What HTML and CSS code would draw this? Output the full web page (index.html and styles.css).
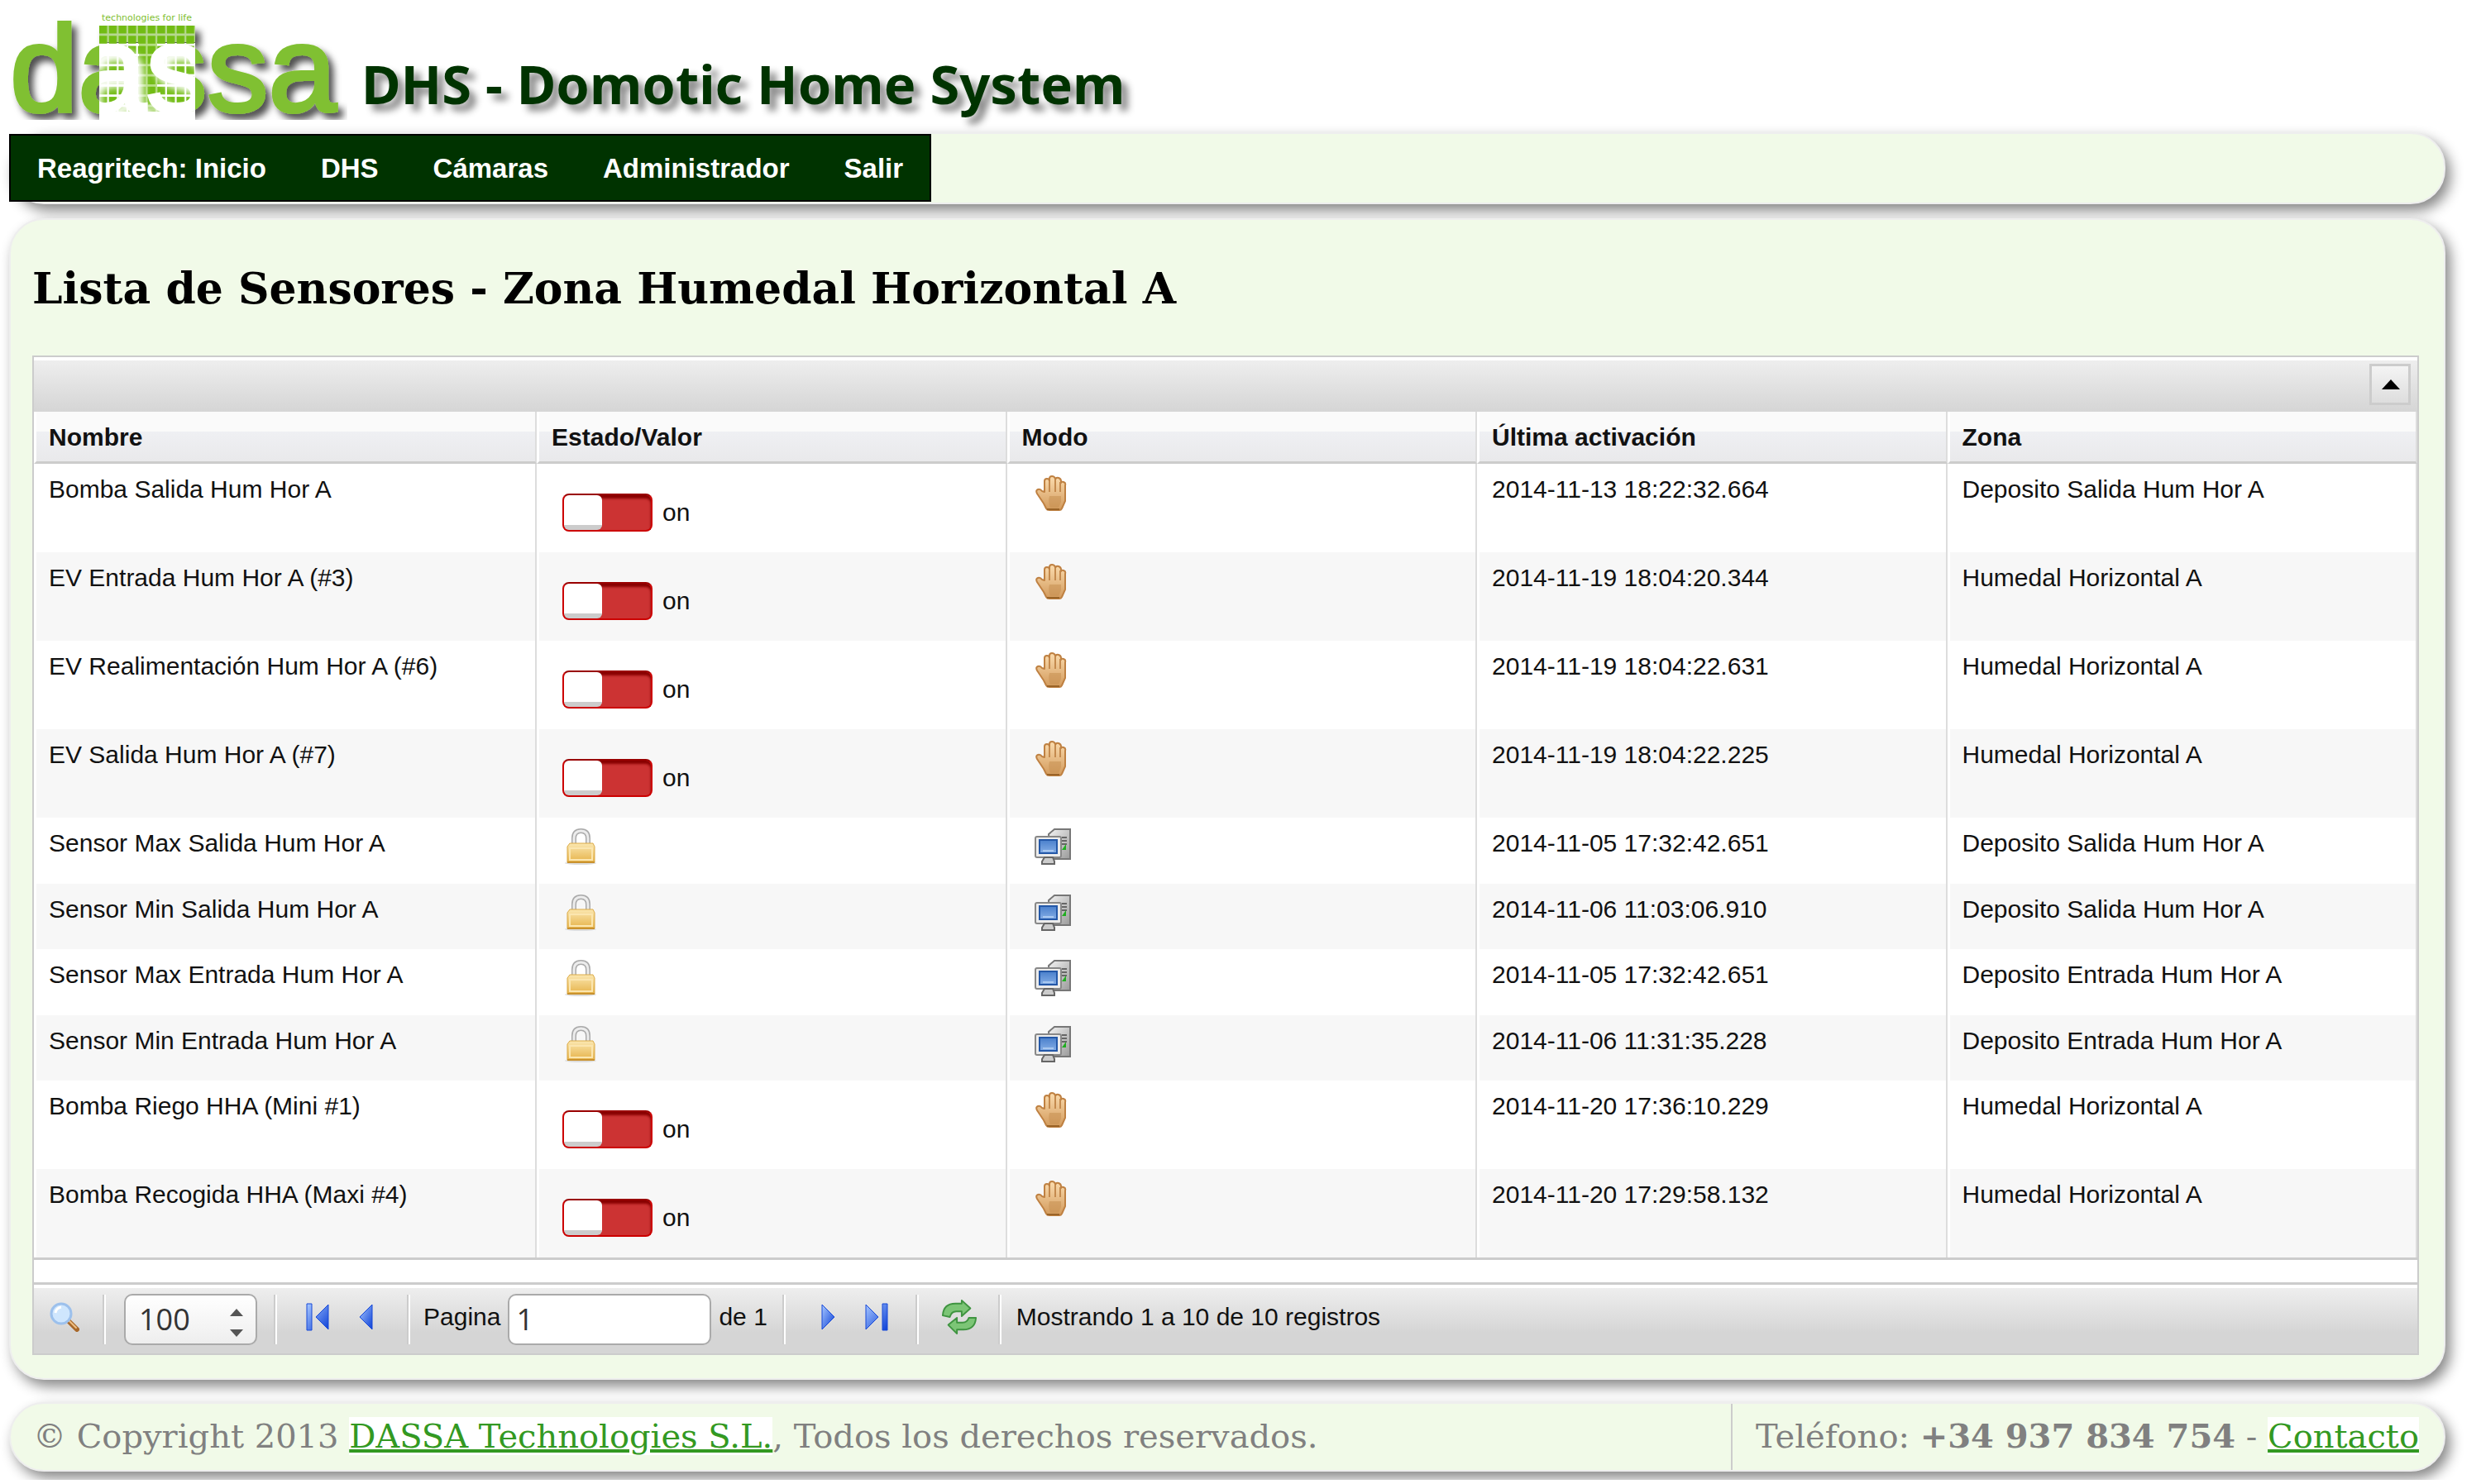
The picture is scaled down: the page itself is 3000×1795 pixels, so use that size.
FILE: index.html
```html
<!doctype html>
<html lang="es">
<head>
    <meta charset="UTF-8">
    <meta name="viewport" content="width=device-width, initial-scale=1.0">
    <title>DHS - Domotic Home System</title>
    <link rel="stylesheet" href="styles.css">
</head>
<body>

<!-- shared icons -->
<svg class="sprite" aria-hidden="true">
    <defs>
        <linearGradient id="gold" x1="0" y1="0" x2="0" y2="1">
            <stop offset="0" stop-color="#fbe7b0"/>
            <stop offset="1" stop-color="#e6b34a"/>
        </linearGradient>
        <linearGradient id="skin" x1="0" y1="0" x2="0" y2="1">
            <stop offset="0" stop-color="#fbdcae"/>
            <stop offset="1" stop-color="#d29a5c"/>
        </linearGradient>
        <linearGradient id="metal" x1="0" y1="0" x2="1" y2="1">
            <stop offset="0" stop-color="#f4f4f4"/>
            <stop offset="1" stop-color="#9a9a9a"/>
        </linearGradient>
        <linearGradient id="screen" x1="0" y1="0" x2="0" y2="1">
            <stop offset="0" stop-color="#4a80cc"/>
            <stop offset="1" stop-color="#85aee6"/>
        </linearGradient>
        <linearGradient id="blue" x1="0" y1="0" x2="1" y2="1">
            <stop offset="0" stop-color="#a8c8ff"/>
            <stop offset="1" stop-color="#0b3fd6"/>
        </linearGradient>
    </defs>
    <symbol id="icon-hand" viewBox="0 0 46 46">
        <path d="M13 22V9q0-3 3-3t3 3V6q0-3 3-3t4 3v1q1-3 4-2t3 4v2q0-2 3-1t2 4v19l-4 9q-1 2-3 2H19q-3 0-4-2l-3-6-8-12q-2-4 1-5t5 2z" fill="url(#skin)" stroke="#bf8142" stroke-width="2" stroke-linejoin="round"/>
        <path d="M19 9v13M26 7v15M32 10v12" fill="none" stroke="#c48a4e" stroke-width="2"/>
        <path d="M19 27h14v7l-3 7H20q-3-7-1-14z" fill="#c68f52" opacity=".55"/>
        <path d="M16 43h15" stroke="#9a6428" stroke-width="2"/>
    </symbol>
    <symbol id="icon-lock" viewBox="0 0 46 46">
        <ellipse cx="21" cy="43" rx="19" ry="2" fill="#ddd"/>
        <path d="M13 22V13q0-9 8.500-9T30 13v9" fill="none" stroke="#aaa" stroke-width="6"/>
        <path d="M13 22V13q0-9 8.500-9T30 13v9" fill="none" stroke="#ececec" stroke-width="3"/>
        <path d="M8 19h28l2 4v19H5V23z" fill="url(#gold)" stroke="#dba944" stroke-width="1"/>
        <path d="M8 25h27v14H8z" fill="none" stroke="#fbe6b0" stroke-width="2"/>
        <path d="M5 42h33" stroke="#c9922f" stroke-width="2"/>
    </symbol>
    <symbol id="icon-computer" viewBox="0 0 46 46">
        <path d="M18 8l7-6h19v36H20z" fill="url(#metal)" stroke="#777" stroke-width="2"/>
        <path d="M34 12h6M34 16h6M34 20h6" stroke="#666" stroke-width="2"/>
        <path d="M39 20v7h-5z" fill="#1fae1f"/>
        <rect x="2" y="11" width="31" height="25" rx="2" fill="#ececec" stroke="#888" stroke-width="2"/>
        <rect x="7" y="15" width="21" height="16" fill="url(#screen)" stroke="#2458a8" stroke-width="2"/>
        <path d="M11 28h13" stroke="#a9c8f0" stroke-width="2"/>
        <path d="M13 36h10l2 5v3H10v-3z" fill="#ccc" stroke="#666" stroke-width="2"/>
    </symbol>
</svg>

<header class="header">
    <svg class="logo" viewBox="11 0 409 145" role="img" aria-label="dassa technologies for life">
        <defs>
            <pattern id="cells" x="120" y="31" width="11.700" height="12.300" patternUnits="userSpaceOnUse">
                <rect width="9.500" height="9.500" fill="#72bc14"/>
            </pattern>
            <!-- the letters turn white where they cross the T -->
            <linearGradient id="word" gradientUnits="userSpaceOnUse" x1="0" y1="0" x2="400" y2="0">
                <stop offset=".3" stop-color="#80c030"/>
                <stop offset=".3" stop-color="#fff"/>
                <stop offset=".59" stop-color="#fff"/>
                <stop offset=".59" stop-color="#80c030"/>
            </linearGradient>
            <filter id="drop" filterUnits="userSpaceOnUse" x="0" y="0" width="420" height="145">
                <feGaussianBlur in="SourceAlpha" stdDeviation="4"/>
                <feOffset dx="6" dy="7" result="soft"/>
                <feFlood x="0" y="0" width="420" height="145" flood-color="#000" flood-opacity=".7" result="dark"/>
                <feFlood x="120" y="56" width="116" height="89" flood-color="#fff" result="light"/>
                <feMerge result="tint">
                    <feMergeNode in="dark"/>
                    <feMergeNode in="light"/>
                </feMerge>
                <feComposite in="tint" in2="soft" operator="in" result="shadow"/>
                <feMerge>
                    <feMergeNode in="shadow"/>
                    <feMergeNode in="SourceGraphic"/>
                </feMerge>
            </filter>
        </defs>
        <path filter="url(#drop)" d="M120 31h116v20H120z" fill="#b6d890"/>
        <path d="M120 52h116v83H120z" fill="#fff"/>
        <path d="M168 50h22v85h-22z" fill="#b6dd85"/>
        <path d="M120 31h116v104H120z" fill="url(#cells)"/>
        <text class="logo-word" filter="url(#drop)" x="12" y="135">dassa</text>
        <text class="logo-tag" x="123" y="25">technologies for life</text>
    </svg>
    <span class="app-title">DHS - Domotic Home System</span>
</header>

<nav class="panel menu">
    <ul class="menu-list">
        <li><a href="#">Reagritech: Inicio</a></li>
        <li><a href="#">DHS</a></li>
        <li><a href="#">Cámaras</a></li>
        <li><a href="#">Administrador</a></li>
        <li><a href="#">Salir</a></li>
    </ul>
</nav>

<main class="panel content">
    <h1>Lista de Sensores - Zona Humedal Horizontal A</h1>

    <div class="grid">
        <div class="grid-title">
            <button type="button" class="toggle" aria-label="Contraer">
                <svg viewBox="0 0 22 12"><path d="M11 0l11 12H0z"/></svg>
            </button>
        </div>

        <table class="sensors">
            <colgroup>
                <col class="col-name">
                <col span="4">
            </colgroup>
            <thead>
            <tr>
                <th>Nombre</th>
                <th>Estado/Valor</th>
                <th>Modo</th>
                <th>Última activación</th>
                <th>Zona</th>
            </tr>
            </thead>
            <tbody>
            <tr class="actuator">
                <td>Bomba Salida Hum Hor A</td>
                <td><label class="switch"><input type="checkbox">on</label></td>
                <td><svg class="icon"><use href="#icon-hand"/></svg></td>
                <td>2014-11-13 18:22:32.664</td>
                <td>Deposito Salida Hum Hor A</td>
            </tr>
            <tr class="actuator">
                <td>EV Entrada Hum Hor A (#3)</td>
                <td><label class="switch"><input type="checkbox">on</label></td>
                <td><svg class="icon"><use href="#icon-hand"/></svg></td>
                <td>2014-11-19 18:04:20.344</td>
                <td>Humedal Horizontal A</td>
            </tr>
            <tr class="actuator">
                <td>EV Realimentación Hum Hor A (#6)</td>
                <td><label class="switch"><input type="checkbox">on</label></td>
                <td><svg class="icon"><use href="#icon-hand"/></svg></td>
                <td>2014-11-19 18:04:22.631</td>
                <td>Humedal Horizontal A</td>
            </tr>
            <tr class="actuator">
                <td>EV Salida Hum Hor A (#7)</td>
                <td><label class="switch"><input type="checkbox">on</label></td>
                <td><svg class="icon"><use href="#icon-hand"/></svg></td>
                <td>2014-11-19 18:04:22.225</td>
                <td>Humedal Horizontal A</td>
            </tr>
            <tr>
                <td>Sensor Max Salida Hum Hor A</td>
                <td><svg class="icon"><use href="#icon-lock"/></svg></td>
                <td><svg class="icon"><use href="#icon-computer"/></svg></td>
                <td>2014-11-05 17:32:42.651</td>
                <td>Deposito Salida Hum Hor A</td>
            </tr>
            <tr>
                <td>Sensor Min Salida Hum Hor A</td>
                <td><svg class="icon"><use href="#icon-lock"/></svg></td>
                <td><svg class="icon"><use href="#icon-computer"/></svg></td>
                <td>2014-11-06 11:03:06.910</td>
                <td>Deposito Salida Hum Hor A</td>
            </tr>
            <tr>
                <td>Sensor Max Entrada Hum Hor A</td>
                <td><svg class="icon"><use href="#icon-lock"/></svg></td>
                <td><svg class="icon"><use href="#icon-computer"/></svg></td>
                <td>2014-11-05 17:32:42.651</td>
                <td>Deposito Entrada Hum Hor A</td>
            </tr>
            <tr>
                <td>Sensor Min Entrada Hum Hor A</td>
                <td><svg class="icon"><use href="#icon-lock"/></svg></td>
                <td><svg class="icon"><use href="#icon-computer"/></svg></td>
                <td>2014-11-06 11:31:35.228</td>
                <td>Deposito Entrada Hum Hor A</td>
            </tr>
            <tr class="actuator">
                <td>Bomba Riego HHA (Mini #1)</td>
                <td><label class="switch"><input type="checkbox">on</label></td>
                <td><svg class="icon"><use href="#icon-hand"/></svg></td>
                <td>2014-11-20 17:36:10.229</td>
                <td>Humedal Horizontal A</td>
            </tr>
            <tr class="actuator">
                <td>Bomba Recogida HHA (Maxi #4)</td>
                <td><label class="switch"><input type="checkbox">on</label></td>
                <td><svg class="icon"><use href="#icon-hand"/></svg></td>
                <td>2014-11-20 17:29:58.132</td>
                <td>Humedal Horizontal A</td>
            </tr>
            </tbody>
        </table>

        <div class="pager">
            <div class="pager-group pager-search">
                <button type="button" aria-label="Buscar">
                    <svg class="icon-search" viewBox="0 0 36 36">
                        <path d="M23 23l10 10" stroke="#a8682a" stroke-width="6" stroke-linecap="round"/>
                        <path d="M23 22l9 9" stroke="#efc084" stroke-width="2" stroke-linecap="round"/>
                        <circle cx="14" cy="14" r="12" fill="#cfe6fd" stroke="#9cc0ec" stroke-width="3"/>
                        <path d="M7 13q1-6 7-7" fill="none" stroke="#fff" stroke-width="3"/>
                    </svg>
                </button>
            </div>
            <div class="pager-group pager-size">
                <div class="page-size">
                    <select aria-label="Registros por página">
                        <option>100</option>
                    </select>
                    <svg class="arrows" viewBox="0 0 16 34"><path d="M8 0l8 9H0zM8 34l8-9H0z" fill="#555"/></svg>
                </div>
            </div>
            <div class="pager-group pager-back">
                <button type="button" aria-label="Primera">
                    <svg class="icon-end" viewBox="0 0 28 34"><path d="M1 1h6v32H1zM27 2v30L12 17z" fill="url(#blue)" stroke="#1648d8" stroke-width="1"/></svg>
                </button>
                <button type="button" aria-label="Anterior">
                    <svg class="icon-step" viewBox="0 0 17 34"><path d="M16 2v30L1 17z" fill="url(#blue)" stroke="#1648d8" stroke-width="1"/></svg>
                </button>
            </div>
            <div class="pager-group pager-page">
                <label class="page-number"><span>Pagina</span> <input type="text" value="1"></label>
                <span>de 1</span>
            </div>
            <div class="pager-group pager-forward">
                <button type="button" aria-label="Siguiente">
                    <svg class="icon-step" viewBox="0 0 17 34"><path d="M1 2v30l15-15z" fill="url(#blue)" stroke="#1648d8" stroke-width="1"/></svg>
                </button>
                <button type="button" aria-label="Última">
                    <svg class="icon-end" viewBox="0 0 28 34"><path d="M21 1h6v32h-6zM1 2v30l15-15z" fill="url(#blue)" stroke="#1648d8" stroke-width="1"/></svg>
                </button>
            </div>
            <div class="pager-group pager-reload">
                <button type="button" aria-label="Recargar">
                    <svg class="icon-reload" viewBox="0 0 46 46">
                        <g fill="#7cc576" stroke="#3f9440" stroke-width="2" stroke-linejoin="round">
                            <path d="M2 21q1-15 16-15h8V2l11 10-11 10v-6h-7q-6 0-8 7z"/>
                            <path d="M44 24q-1 15-16 15h-8v5L9 33l11-9v6h7q6 0 8-6z"/>
                        </g>
                    </svg>
                </button>
            </div>
            <div class="pager-group pager-status">
                <span>Mostrando 1 a 10 de 10 registros</span>
            </div>
        </div>
    </div>
</main>

<footer class="panel footer">
    <p>© Copyright 2013 <a href="#">DASSA Technologies S.L.</a>, Todos los derechos reservados.</p>
    <p class="contact">Teléfono: <strong>+34 937 834 754</strong> - <a href="#">Contacto</a></p>
</footer>

</body>
</html>
```
FILE: styles.css
```css
*,
*::before {
    box-sizing: border-box;
}

body {
    margin: 0;
    padding: 0 43px 0 11px;
    background-color: #fff;
    font-family: "Liberation Sans", Arial, sans-serif;
    font-size: 30px;
    line-height: 34px;
    color: #111;
}

.sprite {
    position: absolute;
    width: 0;
    height: 0;
}

button {
    padding: 0;
    border: none;
    background: none;
    cursor: pointer;
}

button svg {
    display: block;
}

/* header */
.header {
    display: flex;
    align-items: flex-start;
    gap: 17px;
    height: 145px;
}

.logo {
    width: 409px;
    height: 145px;
}

.logo-word {
    font-family: "Liberation Sans", Arial, sans-serif;
    font-size: 148px;
    fill: url(#word);
    stroke: url(#word);
    stroke-width: 4px;
}

.logo-tag {
    font-family: "DejaVu Sans", sans-serif;
    font-size: 11px;
    fill: #80c030;
}

.app-title {
    padding-top: 69px;
    font-family: "Noto Sans", "Open Sans", sans-serif;
    font-size: 65px;
    font-weight: bold;
    line-height: 64px;
    color: #003300;
    text-shadow: 8px 8px 8px #888;
}

/* panels */
.panel {
    background-color: #f1fae8;
    border: 2px solid #eee;
    border-radius: 42px;
    box-shadow: 6px 8px 16px #888;
}

.menu {
    margin-top: 15px;
    height: 87px;
}

.menu-list {
    display: inline-flex;
    gap: 2px;
    margin: 0 0 0 -2px;
    padding: 0;
    list-style: none;
    background-color: #003300;
    border: 2px solid #000;
}

.menu-list a {
    display: block;
    padding: 22px 32px 20px;
    font-size: 33px;
    font-weight: bold;
    line-height: 36px;
    color: #fff;
    text-decoration: none;
}

.content {
    margin-top: 17px;
    padding: 50px 30px 28px 26px;
}

h1 {
    margin: 0 0 48px;
    font-family: "DejaVu Serif", serif;
    font-size: 52px;
    line-height: 66px;
    color: #000;
}

/* grid */
.grid {
    background-color: #fff;
    border: 2px solid #ccc;
}

.grid-title {
    display: flex;
    justify-content: flex-end;
    height: 66px;
    padding: 4px 8px 0;
    border-top: 4px solid #fff;
    background: linear-gradient(#eee, #d5d5d5);
}

.toggle {
    width: 50px;
    height: 50px;
    padding-left: 12px;
    border: 3px solid #ccc;
    background: linear-gradient(#f4f4f4, #ddd);
}

.toggle svg {
    width: 22px;
    height: 12px;
}

.sensors {
    width: 100%;
    table-layout: fixed;
    border-collapse: separate;
    border-spacing: 0;
    border-bottom: 3px solid #ccc;
}

.col-name {
    width: 21.1%;
}

.sensors th {
    height: 63px;
    padding: 2px 15px 0;
    border-left: 3px solid #fff;
    border-right: 2px solid #ddd;
    border-bottom: 3px solid #ccc;
    background: linear-gradient(#fafafa 40%, #eff0f3 40%, #e9e9eb);
    text-align: left;
}

.sensors td {
    height: 80px;
    padding: 14px 15px 0;
    border-left: 3px solid #fff;
    border-right: 2px solid #ddd;
    vertical-align: top;
}

.sensors tbody tr:nth-child(even) td {
    height: 79px;
    background-color: #f7f7f7;
}

.sensors tbody .actuator:nth-child(n) td {
    height: 107px;
}

.icon {
    display: block;
    width: 46px;
    height: 46px;
    margin: -2px 0 0 14px;
}

.switch {
    display: flex;
    align-items: center;
    gap: 12px;
    padding: 22px 0 0 13px;
}

.switch input {
    appearance: none;
    width: 109px;
    height: 46px;
    margin: 0;
    border: 2px solid #c00;
    border-top-color: #900;
    border-radius: 8px;
    background-color: #c33;
    box-shadow: inset 0 4px 3px #800;
}

.switch input::before {
    content: "";
    display: block;
    width: 46px;
    height: 42px;
    border-radius: 6px;
    border-bottom: 6px solid #ccc;
    background-color: #fff;
}

/* pager */
.pager {
    display: flex;
    align-items: center;
    height: 86px;
    margin-top: 27px;
    border-top: 3px solid #ccc;
    background: linear-gradient(#fff 4px, #eee 4px, #d5d5d5 70%);
}

.pager-group {
    display: flex;
    align-items: center;
    height: 60px;
    border-right: 2px solid #fff;
    box-shadow: inset -2px 0 #ccc;
}

.pager-group span,
.pager-group button {
    padding-bottom: 6px;
}

.pager-search {
    padding: 0 30px 0 19px;
}

.pager-size {
    padding: 0 22px;
}

.pager-back {
    gap: 36px;
    padding: 0 43px 0 35px;
}

.pager-page {
    padding: 0 20px 0 16px;
}

.pager-forward {
    gap: 36px;
    padding: 0 35px 0 43px;
}

.pager-reload {
    padding: 0 26px;
}

.pager-status {
    padding-left: 18px;
    border: none;
    box-shadow: none;
}

.icon-search {
    width: 36px;
    height: 36px;
}

.icon-end {
    width: 28px;
    height: 34px;
}

.icon-step {
    width: 17px;
    height: 34px;
}

.icon-reload {
    width: 46px;
    height: 44px;
}

.page-size {
    position: relative;
}

.page-size select,
.page-number input {
    height: 62px;
    border: 2px solid #aaa;
    border-radius: 10px;
    background-color: #fff;
    font-family: "Open Sans", "Noto Sans", sans-serif;
    font-size: 36px;
    color: #333;
}

.page-size select {
    appearance: none;
    display: block;
    width: 161px;
    padding: 0 16px;
    background-image: linear-gradient(#fff, #eee);
}

.arrows {
    position: absolute;
    top: 18px;
    right: 17px;
    width: 16px;
    height: 34px;
    pointer-events: none;
}

.page-number {
    display: flex;
    align-items: center;
    gap: 9px;
}

.page-number input {
    width: 246px;
    margin-right: 9px;
    padding: 0 8px;
}

/* footer */
.footer {
    display: flex;
    justify-content: space-between;
    margin: 27px 0 10px;
    padding: 0 30px 0 27px;
    font-family: "DejaVu Serif", serif;
    font-size: 40px;
    line-height: 78px;
    color: #808080;
}

.footer p {
    margin: 0;
    padding-bottom: 2px;
}

.footer a {
    background-color: #fff;
    color: #339922;
}

.footer .contact {
    padding-left: 28px;
    border-left: 2px solid #ccc;
}
```
